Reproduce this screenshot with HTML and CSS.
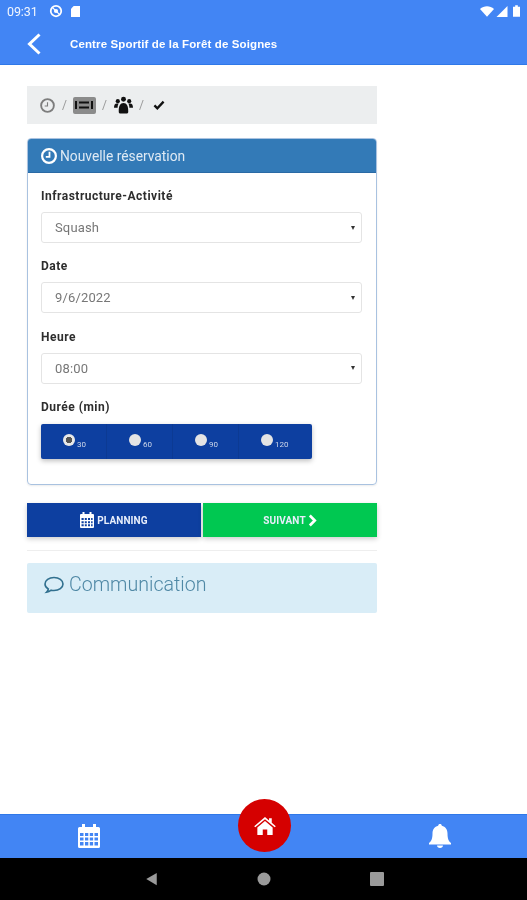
FILE: index.html
```html
<!DOCTYPE html>
<html lang="fr">
<head>
<meta charset="utf-8">
<title>Nouvelle réservation</title>
<link rel="stylesheet" href="styles.css">
</head>
<body>
<div class="app">
  <header class="top">
    <div class="status">
      <span class="time">09:31</span>
      <svg class="st-ic" viewBox="0 0 16 16" width="14" height="14"><circle cx="8" cy="8" r="6" fill="none" stroke="#fff" stroke-width="2"/><circle cx="8" cy="8" r="2.4" fill="#fff"/><path d="M3.5 3.5l9 9" stroke="#fff" stroke-width="1.4"/></svg>
      <svg class="st-ic2" viewBox="0 0 10 12" width="9" height="11"><path d="M3 0h7v12H0V3z" fill="#fff"/></svg>
      <span class="status-right">
        <svg viewBox="0 0 16 12" width="14" height="11"><path d="M0 3.2C4.500-1 11.500-1 16 3.200L8 12z" fill="#fff"/></svg>
        <svg viewBox="0 0 12 12" width="12" height="11"><path d="M12 0v12H0z" fill="#fff"/></svg>
        <svg viewBox="0 0 8 13" width="7" height="12"><path d="M2.500 0h3v1.500H8V13H0V1.500h2.500z" fill="#fff"/></svg>
      </span>
    </div>
    <div class="title-bar">
      <svg class="back" viewBox="0 0 16 24" width="16" height="24"><path d="M13.500 2.500L3.500 12l10 9.500" fill="none" stroke="#fff" stroke-width="3"/></svg>
      <span class="title">Centre Sportif de la Forêt de Soignes</span>
    </div>
  </header>

  <main class="main">
    <nav class="steps">
      <svg class="step-clock" viewBox="0 0 16 16" width="15" height="15"><circle cx="8" cy="8" r="6.800" fill="none" stroke="#7d7d7d" stroke-width="2"/><path d="M8 4.500v4H5" fill="none" stroke="#7d7d7d" stroke-width="1.200"/></svg>
      <span class="sep">/</span>
      <span class="step-active"><svg viewBox="0 0 18 10" width="18" height="10"><path d="M0 1h2v8H0zM16 1h2v8h-2zM4 1.500h10v2H4zM4 6.500h10v2H4z" fill="#111"/></svg></span>
      <span class="sep">/</span>
      <svg class="step-people" viewBox="0 0 20 18" width="19" height="18"><g fill="#111"><circle cx="10" cy="3" r="2.600"/><circle cx="4" cy="5" r="2.200"/><circle cx="16" cy="5" r="2.200"/><path d="M0 12c0-3 1-4.500 3-4.500h2c-.8 1-1.200 2.500-1.200 4.500zM20 12c0-3-1-4.500-3-4.500h-2c.8 1 1.200 2.500 1.200 4.500zM5 16c0-6 1.500-9 5-9s5 3 5 9c0 1-.5 2-2 2H7c-1.500 0-2-1-2-2z"/></g></svg>
      <span class="sep">/</span>
      <svg class="check" viewBox="0 0 14 12" width="12" height="10"><path d="M1.500 6.500l3.500 3.500 7.500-8" fill="none" stroke="#111" stroke-width="2.800"/></svg>
    </nav>

    <section class="panel">
      <h2 class="panel-head">
        <svg viewBox="0 0 16 16" width="16" height="16"><circle cx="8" cy="8" r="6.900" fill="none" stroke="#fff" stroke-width="2.200"/><path d="M8.500 3.800v5H4.800" fill="none" stroke="#fff" stroke-width="1.800"/></svg>
        <span>Nouvelle réservation</span>
      </h2>
      <div class="panel-body">
        <div class="field">
          <div class="label">Infrastructure-Activité</div>
          <div class="select"><span>Squash</span><i class="caret"></i></div>
        </div>
        <div class="field">
          <div class="label">Date</div>
          <div class="select"><span>9/6/2022</span><i class="caret"></i></div>
        </div>
        <div class="field">
          <div class="label">Heure</div>
          <div class="select"><span>08:00</span><i class="caret"></i></div>
        </div>
        <div class="field">
          <div class="label">Durée (min)</div>
          <div class="durations">
            <div class="dur"><i class="radio on"></i><small>30</small></div>
            <div class="dur"><i class="radio"></i><small>60</small></div>
            <div class="dur"><i class="radio"></i><small>90</small></div>
            <div class="dur"><i class="radio"></i><small>120</small></div>
          </div>
        </div>
      </div>
    </section>

    <div class="actions">
      <div class="btn btn-blue">
        <svg viewBox="0 0 14 16" width="14" height="16"><path fill="#fff" fill-rule="evenodd" d="M2.500 0h2v2h5V0h2v2H13a1 1 0 0 1 1 1v12a1 1 0 0 1-1 1H1a1 1 0 0 1-1-1V3a1 1 0 0 1 1-1h1.500zM1.500 6v2h2.200V6zm3.300 0v2h2V6zm3.200 0v2h2V6zm3.100 0v2h1.500V6zM1.500 9.200v2h2.200v-2zm3.300 0v2h2v-2zm3.200 0v2h2v-2zm3.100 0v2h1.500v-2zM1.500 12.300v2h2.200v-2zm3.300 0v2h2v-2zm3.200 0v2h2v-2zm3.100 0v2h1.500v-2z"/></svg>
        <span>PLANNING</span>
      </div>
      <div class="btn btn-green">
        <span>SUIVANT</span>
        <svg viewBox="0 0 10 14" width="9" height="13"><path d="M2 1.500L7.500 7 2 12.500" fill="none" stroke="#fff" stroke-width="3"/></svg>
      </div>
    </div>

    <hr class="rule">

    <div class="notice">
      <svg viewBox="0 0 20 18" width="20" height="18"><path d="M10 1.500c5 0 9 2.800 9 6.500s-4 6.500-9 6.500c-1 0-2-.1-2.800-.3-1.200 1-2.800 1.800-4.700 2 1-1 1.600-2 1.800-3.200C2.300 11.900 1 10 1 8c0-3.700 4-6.500 9-6.500z" fill="none" stroke="#31708f" stroke-width="1.600"/></svg>
      <span>Communication</span>
    </div>
  </main>

  <footer class="foot">
    <div class="tabs">
      <div class="tab"><svg viewBox="0 0 22 24" width="22" height="24"><path fill="#fff" fill-rule="evenodd" d="M4 0h3v3h8V0h3v3h2.500A1.500 1.500 0 0 1 22 4.500v18a1.500 1.500 0 0 1-1.500 1.500h-19A1.500 1.500 0 0 1 0 22.500v-18A1.500 1.500 0 0 1 1.500 3H4zM2 9v3h3.500V9zm5 0v3h3.300V9zm4.800 0v3h3.300V9zm4.700 0v3H20V9zM2 13.500v3h3.500v-3zm5 0v3h3.300v-3zm4.800 0v3h3.300v-3zm4.700 0v3H20v-3zM2 18v3.500h3.500V18zm5 0v3.500h3.300V18zm4.800 0v3.500h3.300V18zm4.700 0v3.500H20V18z"/></svg></div>
      <div class="tab tab-spacer"></div>
      <div class="tab tab-bell"><svg viewBox="0 0 22 24" width="22" height="24"><path fill="#fff" d="M11 0c1 0 1.800.7 1.800 1.700C16.500 2.500 18.500 5.500 18.500 9.500c0 5 1 7.500 3.500 9.500v1.500H0V19c2.500-2 3.500-4.500 3.500-9.500 0-4 2-7 5.700-7.800C9.200.7 10 0 11 0zM8 21.500h6c0 1.500-1.300 2.500-3 2.500s-3-1-3-2.500z"/></svg></div>
      <div class="home">
        <svg viewBox="0 0 24 20" width="22" height="18"><path fill="#fff" d="M12 0l4.500 3.800V1.500h3v4.900L24 10.200l-1.200 1.300L12 2.500 1.200 11.500 0 10.200zM12 4.500l8.500 7.200V20h-6v-6h-5v6h-6v-8.300z"/></svg>
      </div>
    </div>
    <div class="sysnav">
      <svg viewBox="0 0 14 16" width="13" height="14"><path d="M13 1v14L1 8z" fill="#9a9a9a"/></svg>
      <svg viewBox="0 0 14 14" width="14" height="14"><circle cx="7" cy="7" r="6.500" fill="#9a9a9a"/></svg>
      <svg viewBox="0 0 14 14" width="14" height="14"><rect width="14" height="14" rx="1" fill="#9a9a9a"/></svg>
    </div>
  </footer>
</div>
</body>
</html>
```
FILE: styles.css
```css
* { box-sizing: border-box; }
html, body { margin: 0; padding: 0; height: 100%; }
body { background: #fff; font-family: Roboto, "Liberation Sans", sans-serif; color: #333; }
.app { width: 527px; height: 900px; display: flex; flex-direction: column; overflow: hidden; filter: blur(.45px); }

.top { height: 65px; background: #4285f4; border-bottom: 1px solid #2f78e8; color: #fff; flex: none; }
.status { height: 24px; display: flex; align-items: center; padding: 0 7px 2px 7px; }
.time { font-size: 12.500px; letter-spacing: -.1px; opacity: .92; }
.st-ic { margin-left: 11px; }
.st-ic2 { margin-left: 8px; }
.status-right { margin-left: auto; display: flex; align-items: center; gap: 2px; }
.status-right svg:last-child { margin-left: 3px; }
.title-bar { height: 40px; display: flex; align-items: center; padding-left: 26px; }
.back { flex: none; }
.title { margin-left: 28px; font-size: 11.500px; font-weight: 700; letter-spacing: .13px; font-family: "Liberation Sans", sans-serif; }

.main { flex: 1; padding: 21px 150px 0 27px; }
.steps { height: 38px; background: #eceeef; display: flex; align-items: center; padding-left: 13px; gap: 6px; }
.step-clock { margin-right: 1px; }
.step-people { margin-left: 1px; }
.sep { font-size: 12px; color: #999; }
.step-active { width: 23px; height: 17px; background: #8b8b8b; border-radius: 2px; display: flex; align-items: center; justify-content: center; }
.check { margin-left: 3px; }
.panel { margin-top: 14px; border: 1px solid #a9c2e0; border-radius: 4px; height: 347px; overflow: hidden; box-shadow: 0 1px 2px rgba(0,0,0,.08); }
.panel-head { margin: 0; height: 34px; background: #337ab7; border-bottom: 1px solid #2a6aa5; color: #dfeaf4; font-size: 13.800px; font-weight: 400; display: flex; align-items: center; gap: 3px; padding-left: 13px; }
.panel-body { padding: 15px 14px 0 13px; }
.field { margin-bottom: 15.300px; }
.label { font-size: 12px; font-weight: 700; letter-spacing: .5px; color: #2d2d2d; height: 17px; line-height: 17px; }
.select { height: 31px; margin-top: 7px; border: 1px solid #e4e4e4; border-radius: 3px; display: flex; align-items: center; justify-content: space-between; padding: 0 6px 0 13px; font-size: 13px; color: #777; letter-spacing: .15px; background: #fff; }
.caret { width: 0; height: 0; border-left: 2px solid transparent; border-right: 2px solid transparent; border-top: 4px solid #333; }
.durations { margin-top: 8px; width: 271px; height: 35px; background: #0d3fa0; border-radius: 2px; display: grid; grid-template-columns: 66px 66px 66px 1fr; box-shadow: 0 2px 5px rgba(0,0,0,.25); }
.dur { display: flex; align-items: flex-start; padding: 10px 0 0 22px; border-right: 1px solid #0c3a93; }
.dur:last-child { border-right: 0; }
.radio { width: 12px; height: 12px; border-radius: 50%; background: #e4e4e4; flex: none; }
.radio.on { background: radial-gradient(circle, #555 0 3px, #e8e8e8 3.500px); }
.dur small { font-size: 8px; color: #cdd7ea; margin: 6px 0 0 2px; line-height: 9px; }

.actions { margin-top: 18px; display: flex; gap: 2px; height: 34px; }
.btn { flex: 1; display: flex; align-items: center; justify-content: center; gap: 2px; color: #e8eefb; font-size: 10px; font-weight: 700; letter-spacing: .1px; box-shadow: 0 2px 5px rgba(0,0,0,.2); }
.btn-blue { background: #0d3fa0; }
.btn-blue span { margin-left: 1px; }
.btn-green { background: #00c851; }
.rule { margin: 13px 0 0; border: 0; border-top: 1px solid #eee; }
.notice { margin-top: 12px; height: 50px; background: #d9edf7; border-radius: 2px; color: #4f88a5; font-size: 19.600px; font-weight: 300; display: flex; align-items: center; gap: 5px; padding: 0 0 7px 17px; }

.foot { flex: none; position: relative; }
.tabs { height: 44px; background: #4285f4; border-top: 1px solid #2f78e8; display: grid; grid-template-columns: 1fr 1fr 1fr; align-items: center; justify-items: center; padding: 0 0 1px 1px; }
.tab { display: flex; }
.tab-bell { margin-left: 1px; }
.home { position: absolute; left: 238px; top: -15px; width: 53px; height: 53px; border-radius: 50%; background: #d50000; display: flex; align-items: center; justify-content: center; }
.sysnav { height: 42px; background: #000; display: flex; align-items: center; justify-content: center; gap: 99px; padding-left: 2px; }
```
